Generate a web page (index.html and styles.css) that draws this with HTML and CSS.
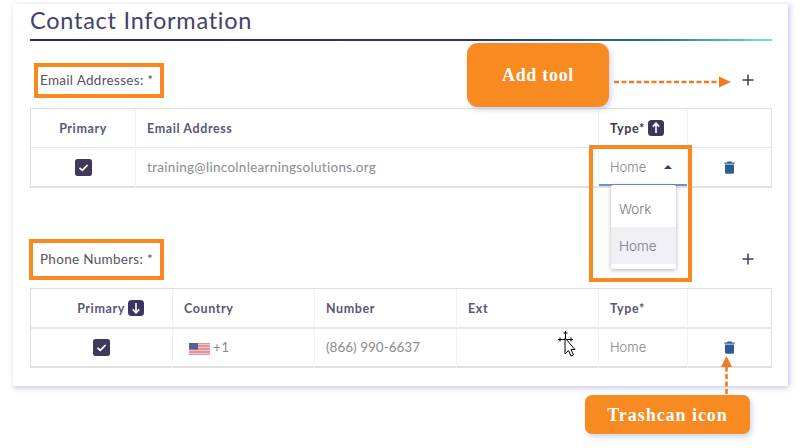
FILE: index.html
```html
<!DOCTYPE html>
<html lang="en">
<head>
<meta charset="utf-8">
<title>Contact Information</title>
<link rel="stylesheet" href="styles.css">
</head>
<body>
<div class="page">
  <main class="card">
    <h1 class="title">Contact Information</h1>
    <div class="rule"></div>

    <section class="section section-email">
      <div class="section-head">
        <span class="label">Email Addresses: *</span>
        <svg class="plus" viewBox="0 0 12 12"><path d="M6 0.5V11.5M0.5 6H11.5"/></svg>
      </div>
      <div class="table table-email">
        <div class="th center">Primary</div>
        <div class="th">Email Address</div>
        <div class="th th-dark">Type* <svg class="sort" viewBox="0 0 16 16"><rect width="16" height="16" rx="3.5"/><path d="M8 13V3.5M4.8 6.6L8 3.2L11.2 6.6"/></svg></div>
        <div class="th"></div>
        <div class="td center"><svg class="check" viewBox="0 0 17 17"><rect width="17" height="17" rx="2.5"/><path d="M4.5 8.8L7.3 11.4L12.6 6"/></svg></div>
        <div class="td">training@lincolnlearningsolutions.org</div>
        <div class="td td-select"><span class="alt">Home</span><svg class="caret" viewBox="0 0 8 4"><path d="M4 0L8 4H0Z"/></svg></div>
        <div class="td center"><svg class="trash" viewBox="0 0 11 13"><path d="M3.6 0.6H7.4L8 1.4H10.6V2.8H0.4V1.4H3Z"/><path d="M1 3.6H10V11.6C10 12.3 9.5 12.8 8.8 12.8H2.2C1.5 12.8 1 12.3 1 11.6Z"/></svg></div>
      </div>
    </section>

    <section class="section section-phone">
      <div class="section-head">
        <span class="label">Phone Numbers: *</span>
        <svg class="plus" viewBox="0 0 12 12"><path d="M6 0.5V11.5M0.5 6H11.5"/></svg>
      </div>
      <div class="table table-phone">
        <div class="th center th-sorted">Primary <svg class="sort" viewBox="0 0 16 16"><rect width="16" height="16" rx="3.5"/><path d="M8 3V12.5M4.8 9.4L8 12.8L11.2 9.4"/></svg></div>
        <div class="th">Country</div>
        <div class="th">Number</div>
        <div class="th">Ext</div>
        <div class="th">Type*</div>
        <div class="th"></div>
        <div class="td center"><svg class="check" viewBox="0 0 17 17"><rect width="17" height="17" rx="2.5"/><path d="M4.5 8.8L7.3 11.4L12.6 6"/></svg></div>
        <div class="td td-country">
          <svg class="flag" viewBox="0 0 21 12">
            <rect width="21" height="12" fill="#e2939b"/>
            <path d="M0 1.5H21M0 4.5H21M0 7.5H21M0 10.5H21" stroke="#f0c4c8" stroke-width="1"/>
            <rect width="9" height="6.5" fill="#5a5d8c"/>
          </svg>
          <span>+1</span>
        </div>
        <div class="td td-number">(866) 990-6637</div>
        <div class="td"></div>
        <div class="td"><span class="alt">Home</span></div>
        <div class="td center"><svg class="trash" viewBox="0 0 11 13"><path d="M3.6 0.6H7.4L8 1.4H10.6V2.8H0.4V1.4H3Z"/><path d="M1 3.6H10V11.6C10 12.3 9.5 12.8 8.8 12.8H2.2C1.5 12.8 1 12.3 1 11.6Z"/></svg></div>
      </div>
    </section>
  </main>

  <div class="select-line"></div>
  <ul class="menu">
    <li class="menu-item">Work</li>
    <li class="menu-item menu-item-on">Home</li>
  </ul>

  <div class="mark mark-email"></div>
  <div class="mark mark-phone"></div>
  <div class="mark mark-type"></div>

  <div class="callout callout-add">Add tool</div>
  <div class="callout callout-trash">Trashcan icon</div>

  <svg class="overlay" viewBox="0 0 804 448">
    <path class="dash" d="M614 82H720"/>
    <path class="head" d="M719 76.500L731 82L719 87.500Z"/>
    <path class="dash" d="M726.500 394V366"/>
    <path class="head" d="M726.500 356L732 367H721Z"/>
    <g class="cursor">
      <path class="cross" d="M565.500 331V347M558 339.500H573M563.500 333H567.500M560 337.500V341.500M571 337.500V341.500"/>
      <path class="pointer" d="M565 338V354L568.500 350.500L571 356L573.500 355L571 349.500H575Z"/>
    </g>
  </svg>
</div>
</body>
</html>
```

FILE: styles.css
```css
* { box-sizing: border-box; }

html, body {
  margin: 0;
  padding: 0;
  background: #fff;
}

.page {
  position: relative;
  width: 804px;
  height: 448px;
  overflow: hidden;
  font-family: Lato, "Noto Sans", sans-serif;
}

.card {
  width: 775px;
  height: 382px;
  margin: 4px 0 0 13px;
  padding: 0 16px 0 17px;
  background: #fff;
  box-shadow: 3px 0 4px rgba(190, 190, 225, 0.5), 0 3px 4px rgba(190, 190, 225, 0.5);
}

.title {
  margin: 0;
  height: 35px;
  font-size: 23.500px;
  line-height: 33px;
  font-weight: 400;
  letter-spacing: 0.75px;
  color: #45426a;
}

.rule {
  height: 2px;
  background: linear-gradient(90deg, #2e2e5c 0%, #2e3560 60%, #1f7c8c 85%, #6fe3dc 100%);
}

.section-email { margin-top: 24px; }
.section-phone { margin-top: 56px; }

.section-head {
  display: flex;
  align-items: center;
  justify-content: space-between;
  height: 44px;
  padding: 0 18px 14px 10px;
}

.section-email .section-head { height: 43px; }

.label {
  font-size: 13.500px;
  letter-spacing: 0.3px;
  color: #54545e;
}

.plus {
  width: 12px;
  height: 12px;
  fill: none;
  stroke: #3d3a5c;
  stroke-width: 1.5;
}

.table {
  display: grid;
  grid-template-rows: 40px 40px;
  border: 1px solid #e0e0e2;
  border-bottom-width: 2px;
  height: 80px;
}

.table-email { grid-template-columns: 105px 463px 89px 1fr; }
.table-phone { grid-template-columns: 142px 142px 142px 142px 89px 1fr; }

.table-phone .th { border-bottom-width: 2px; height: 40px; }

.th, .td {
  display: flex;
  align-items: center;
  padding: 0 11px;
  border-right: 1px solid #f0f0f5;
}

.td { padding-bottom: 4px; }

.table-email .th:nth-child(4), .table-email .td:nth-child(8),
.table-phone .th:nth-child(6), .table-phone .td:nth-child(12) { border-right: 0; }

.th {
  height: 39px;
  gap: 3px;
  font-size: 12.500px;
  font-weight: 700;
  letter-spacing: 0.6px;
  color: #5a5778;
  border-bottom: 1px solid #e6e6e8;
}

.th-dark { color: #3a3a44; }

.th-sorted { padding-left: 29px; }

.td {
  font-size: 13.500px;
  letter-spacing: 0.3px;
  color: #8a8a90;
}

.td-number { letter-spacing: 0; }

.center { justify-content: center; }

.alt {
  font-family: Inter, Lato, sans-serif;
  font-weight: 300;
  font-size: 13px;
  letter-spacing: 0;
  color: #7f7f86;
}

.td-select { justify-content: space-between; padding-right: 15px; }

.td-country { gap: 3px; padding-left: 16px; }

.flag {
  width: 21px;
  height: 12px;
  margin-top: 4px;
  flex: none;
}

.caret { width: 8px; height: 4px; fill: #3d3a5c; }

.sort { width: 16px; height: 16px; flex: none; }
.sort rect { fill: #3d3560; }
.sort path { fill: none; stroke: #fff; stroke-width: 1.6; }

.check { width: 17px; height: 17px; }
.check rect { fill: #413959; }
.check path { fill: none; stroke: #fff; stroke-width: 1.7; }

.trash { width: 11px; height: 13px; fill: #2f5b94; }

.select-line {
  position: absolute;
  left: 599px;
  top: 184px;
  width: 88px;
  height: 2px;
  background: #6f93c4;
}

.menu {
  position: absolute;
  left: 611px;
  top: 185px;
  width: 65px;
  height: 84px;
  margin: 0;
  padding: 5px 0;
  list-style: none;
  background: #fff;
  border-radius: 2px;
  box-shadow: 0 1px 4px rgba(0, 0, 0, 0.32);
}

.menu-item {
  display: flex;
  align-items: center;
  height: 37px;
  padding-left: 8px;
  font-family: Inter, Lato, sans-serif;
  font-weight: 300;
  font-size: 13.500px;
  color: #77777e;
}

.menu-item-on { background: #efeff5; }

.mark {
  position: absolute;
  border: 4px solid #f7891f;
}

.mark-email { left: 34px; top: 63px; width: 130px; height: 35px; }
.mark-phone { left: 29px; top: 239px; width: 135px; height: 41px; }
.mark-type { left: 589px; top: 145px; width: 103px; height: 137px; }

.callout {
  position: absolute;
  display: flex;
  align-items: center;
  justify-content: center;
  background: #f78a20;
  color: #fff;
  font-family: "Liberation Serif", serif;
  font-weight: 700;
  font-size: 18px;
  box-shadow: 2px 3px 5px rgba(170, 170, 215, 0.5);
}

.callout-add {
  left: 467px;
  top: 43px;
  width: 142px;
  height: 64px;
  border-radius: 11px;
  padding-top: 1px;
  letter-spacing: 0.7px;
}

.callout-trash {
  left: 585px;
  top: 395px;
  width: 165px;
  height: 39px;
  border-radius: 7px;
  padding-top: 1px;
  letter-spacing: 0.95px;
}

.overlay {
  position: absolute;
  left: 0;
  top: 0;
  width: 804px;
  height: 448px;
  pointer-events: none;
}

.dash {
  fill: none;
  stroke: #ef7a22;
  stroke-width: 2.600;
  stroke-dasharray: 5 2.500;
}

.head { fill: #ef7a22; }

.cross { fill: none; stroke: #000; stroke-width: 1; }

.pointer { fill: #fff; stroke: #000; stroke-width: 1; }
```
